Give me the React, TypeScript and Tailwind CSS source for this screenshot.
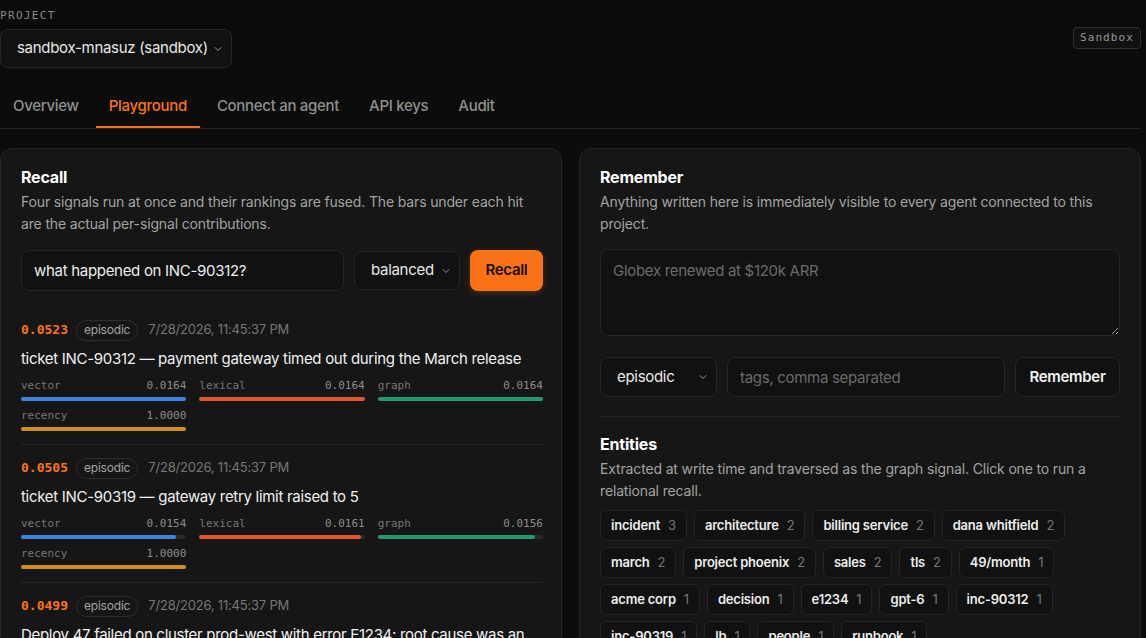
import { ChevronDown } from "lucide-react";

const mono = "font-['DejaVu_Sans_Mono','Liberation_Mono',monospace]";

type Signal = { name: string; value: string; fill: number; color: string };

const colors: Record<string, string> = {
  vector: "bg-[#3f84e2]",
  lexical: "bg-[#e0592c]",
  graph: "bg-[#1f9b6c]",
  recency: "bg-[#d28f1d]",
};

function sig(name: string, value: string, fill: number): Signal {
  return { name, value, fill, color: colors[name] };
}

const hits = [
  {
    score: "0.0523",
    text: "ticket INC-90312 — payment gateway timed out during the March release",
    signals: [sig("vector", "0.0164", 1), sig("lexical", "0.0164", 1), sig("graph", "0.0164", 1), sig("recency", "1.0000", 1)],
  },
  {
    score: "0.0505",
    text: "ticket INC-90319 — gateway retry limit raised to 5",
    signals: [sig("vector", "0.0154", 0.94), sig("lexical", "0.0161", 0.98), sig("graph", "0.0156", 0.95), sig("recency", "1.0000", 1)],
  },
  {
    score: "0.0499",
    text: "Deploy 47 failed on cluster prod-west with error E1234: root cause was an expired TLS certificate on the lb in front of the billing service.",
    signals: [sig("vector", "0.0152", 0.93), sig("lexical", "0.0159", 0.97), sig("graph", "0.0161", 0.98), sig("recency", "1.0000", 1)],
  },
];

const entities: [string, number][] = [
  ["incident", 3],
  ["architecture", 2],
  ["billing service", 2],
  ["dana whitfield", 2],
  ["march", 2],
  ["project phoenix", 2],
  ["sales", 2],
  ["tls", 2],
  ["49/month", 1],
  ["acme corp", 1],
  ["decision", 1],
  ["e1234", 1],
  ["gpt-6", 1],
  ["inc-90312", 1],
  ["inc-90319", 1],
  ["lb", 1],
  ["people", 1],
  ["runbook", 1],
];

const tabs = ["Overview", "Playground", "Connect an agent", "API keys", "Audit"];

function Select({ value, className }: { value: string; className: string }) {
  return (
    <div className={`relative ${className}`}>
      <select
        defaultValue={value}
        className="h-full w-full appearance-none rounded-lg border border-[#262626] bg-[#111111] pl-4 pr-6 text-[15px] tracking-[-0.3px] text-[#e8e8e8] outline-none"
      >
        <option>{value}</option>
      </select>
      <ChevronDown className="pointer-events-none absolute right-2 top-1/2 size-3 -translate-y-1/2 text-[#bdbdbd]" strokeWidth={1.5} />
    </div>
  );
}

function Hit({ hit }: { hit: (typeof hits)[number] }) {
  return (
    <div className="border-b border-[#252525] pt-[13px] pb-[13px]">
      <div className="flex h-5 items-center">
        <span className={`${mono} text-[13px] font-bold text-[#f97316]`}>{hit.score}</span>
        <span className="ml-2 inline-flex h-[21px] items-center rounded-full border border-[#2e2e2e] px-[7px] text-xs tracking-[-0.2px] text-[#a3a3a3]">
          episodic
        </span>
        <span className="ml-2.5 text-[13px] tracking-[-0.2px] text-[#767676]">7/28/2026, 11:45:37 PM</span>
      </div>
      <p className="mt-2 text-[15px] leading-[22px] tracking-[-0.3px] text-[#f0f0f0]">{hit.text}</p>
      <div className="mt-2 grid grid-cols-3 gap-x-[13px] gap-y-[7px]">
        {hit.signals.map((s) => (
          <div key={s.name}>
            <div className={`${mono} flex justify-between text-[11px] leading-4 text-[#777777]`}>
              <span>{s.name}</span>
              <span className="text-[#8c8c8c]">{s.value}</span>
            </div>
            <div className="mt-[3px] h-1 rounded-full bg-[#2a2a2a]">
              <div className={`h-1 rounded-full ${s.color}`} style={{ width: `${s.fill * 100}%` }} />
            </div>
          </div>
        ))}
      </div>
    </div>
  );
}

export default function App() {
  return (
    <div className="min-h-screen bg-[#0c0c0c] font-['Inter','Liberation_Sans',sans-serif] text-[#ededed]">
      <div className="w-[1141px] pt-2">
        <div className="flex items-start justify-between">
          <div>
            <div className={`${mono} text-[11px] leading-4 tracking-[0.12em] text-[#8a8a8a]`}>PROJECT</div>
            <Select value="sandbox-mnasuz (sandbox)" className="mt-[5px] h-[39px] w-[232px]" />
          </div>
          <span
            className={`${mono} mt-[19px] rounded border border-[#2f2f2f] bg-[#111111] px-[6px] py-[3px] text-[11px] leading-[14px] tracking-[0.1em] text-[#9a9a9a]`}
          >
            Sandbox
          </span>
        </div>

        <nav className="mt-[17px] flex gap-1 border-b border-[#262626]">
          {tabs.map((t) => (
            <div
              key={t}
              className={`border-b-2 px-[13px] pt-[10px] pb-[9px] text-[15px] font-medium leading-[22px] tracking-[-0.3px] ${
                t === "Playground" ? "border-[#f97316] text-[#f97316]" : "border-transparent text-[#8f8f8f]"
              }`}
            >
              {t}
            </div>
          ))}
        </nav>

        <div className="mt-[19px] grid grid-cols-2 gap-[17px]">
          <section className="rounded-xl border border-[#252525] bg-[#161616] pl-5 pr-[18px] pt-[18px] pb-5">
            <h2 className="text-base font-bold leading-5 tracking-[-0.2px] text-white">Recall</h2>
            <p className="mt-1 text-sm leading-[22px] tracking-[-0.15px] text-[#a3a3a3]">
              Four signals run at once and their rankings are fused. The bars under each hit are the actual per-signal
              contributions.
            </p>
            <div className="mt-[15px] flex h-[41px] gap-2.5">
              <input
                defaultValue="what happened on INC-90312?"
                className="h-full flex-1 rounded-lg border border-[#262626] bg-[#111111] px-3 text-[15px] tracking-[-0.3px] text-[#ededed] outline-none"
              />
              <Select value="balanced" className="h-[39px] w-[106px] self-center" />
              <button className="h-full w-[73px] rounded-lg bg-[#f97316] text-[15px] font-semibold tracking-[-0.3px] text-[#1a0c02] shadow-[0_2px_6px_rgba(249,115,22,0.25)]">
                Recall
              </button>
            </div>
            <div className="mt-4">
              {hits.map((h) => (
                <Hit key={h.score} hit={h} />
              ))}
            </div>
          </section>

          <section className="self-start rounded-xl border border-[#252525] bg-[#161616] px-5 pt-[18px] pb-5">
            <h2 className="text-base font-bold leading-5 tracking-[-0.2px] text-white">Remember</h2>
            <p className="mt-1 text-sm leading-[22px] tracking-[-0.15px] text-[#a3a3a3]">
              Anything written here is immediately visible to every agent connected to this project.
            </p>
            <textarea
              placeholder="Globex renewed at $120k ARR"
              className="mt-[14px] block h-[87px] w-full rounded-lg border border-[#262626] bg-[#111111] px-3 py-2.5 text-[15px] leading-[22px] tracking-[-0.3px] text-[#ededed] outline-none [color-scheme:dark] placeholder:text-[#6b6b6b]"
            />
            <div className="mt-[21px] flex h-10 gap-2.5">
              <Select value="episodic" className="h-full w-[117px]" />
              <input
                placeholder="tags, comma separated"
                className="h-full flex-1 rounded-lg border border-[#262626] bg-[#111111] px-3 text-[15px] tracking-[-0.3px] text-[#ededed] outline-none placeholder:text-[#6b6b6b]"
              />
              <button className="h-full w-[105px] rounded-lg border border-[#262626] bg-[#111111] text-[15px] font-semibold tracking-[-0.3px] text-[#f2f2f2]">
                Remember
              </button>
            </div>
            <div className="mt-[19px] border-t border-[#252525] pt-[17px]">
              <h2 className="text-base font-bold leading-5 tracking-[-0.2px] text-white">Entities</h2>
              <p className="mt-1 text-sm leading-[22px] tracking-[-0.15px] text-[#a3a3a3]">
                Extracted at write time and traversed as the graph signal. Click one to run a relational recall.
              </p>
              <div className="mt-2 flex flex-wrap gap-[7px] gap-y-[6px]">
                {entities.map(([name, n]) => (
                  <button
                    key={name}
                    className="flex h-[31px] items-center gap-[8px] rounded-md border border-[#252525] bg-[#111111] pl-[10px] pr-[10px] text-[13px] tracking-[-0.2px]"
                  >
                    <span className="font-semibold text-[#ededed]">{name}</span>
                    <span className="text-[#777777]">{n}</span>
                  </button>
                ))}
              </div>
            </div>
          </section>
        </div>
      </div>
    </div>
  );
}
